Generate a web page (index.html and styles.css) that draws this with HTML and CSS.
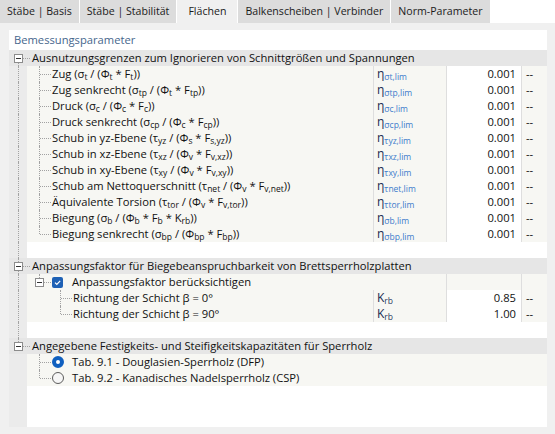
FILE: index.html
```html
<!DOCTYPE html>
<html lang="de">
  <head>
    <meta charset="UTF-8" />
    <title>Flächen</title>
    <link rel="stylesheet" href="styles.css">
  </head>
  <body>
    <div class="tabs">
      <div class="tab">Stäbe | Basis</div>
      <div class="tab">Stäbe | Stabilität</div>
      <div class="tab active">Flächen</div>
      <div class="tab">Balkenscheiben | Verbinder</div>
      <div class="tab">Norm-Parameter</div>
    </div>

    <div class="page">
      <div class="panel">
        <div class="title">Bemessungsparameter</div>

        <!-- Ausnutzungsgrenzen -->
        <div class="row group">
          <span class="node v-bot h-box"><span class="toggle"></span></span>
          <span class="label">Ausnutzungsgrenzen zum Ignorieren von Schnittgrößen und Spannungen</span>
        </div>
        <div class="row item">
          <span class="node v-full"></span><span class="node v-full h"></span>
          <span class="label">Zug (σ<sub>t</sub> / (Φ<sub>t</sub> * F<sub>t</sub>))</span>
          <span class="sym">η<sub>σt,lim</sub></span><span class="val">0.001</span><span class="unit">--</span>
        </div>
        <div class="row item">
          <span class="node v-full"></span><span class="node v-full h"></span>
          <span class="label">Zug senkrecht (σ<sub>tp</sub> / (Φ<sub>t</sub> * F<sub>tp</sub>))</span>
          <span class="sym">η<sub>σtp,lim</sub></span><span class="val">0.001</span><span class="unit">--</span>
        </div>
        <div class="row item">
          <span class="node v-full"></span><span class="node v-full h"></span>
          <span class="label">Druck (σ<sub>c</sub> / (Φ<sub>c</sub> * F<sub>c</sub>))</span>
          <span class="sym">η<sub>σc,lim</sub></span><span class="val">0.001</span><span class="unit">--</span>
        </div>
        <div class="row item">
          <span class="node v-full"></span><span class="node v-full h"></span>
          <span class="label">Druck senkrecht (σ<sub>cp</sub> / (Φ<sub>c</sub> * F<sub>cp</sub>))</span>
          <span class="sym">η<sub>σcp,lim</sub></span><span class="val">0.001</span><span class="unit">--</span>
        </div>
        <div class="row item">
          <span class="node v-full"></span><span class="node v-full h"></span>
          <span class="label">Schub in yz-Ebene (τ<sub>yz</sub> / (Φ<sub>s</sub> * F<sub>s,yz</sub>))</span>
          <span class="sym">η<sub>τyz,lim</sub></span><span class="val">0.001</span><span class="unit">--</span>
        </div>
        <div class="row item">
          <span class="node v-full"></span><span class="node v-full h"></span>
          <span class="label">Schub in xz-Ebene (τ<sub>xz</sub> / (Φ<sub>v</sub> * F<sub>v,xz</sub>))</span>
          <span class="sym">η<sub>τxz,lim</sub></span><span class="val">0.001</span><span class="unit">--</span>
        </div>
        <div class="row item">
          <span class="node v-full"></span><span class="node v-full h"></span>
          <span class="label">Schub in xy-Ebene (τ<sub>xy</sub> / (Φ<sub>v</sub> * F<sub>v,xy</sub>))</span>
          <span class="sym">η<sub>τxy,lim</sub></span><span class="val">0.001</span><span class="unit">--</span>
        </div>
        <div class="row item">
          <span class="node v-full"></span><span class="node v-full h"></span>
          <span class="label">Schub am Nettoquerschnitt (τ<sub>net</sub> / (Φ<sub>v</sub> * F<sub>v,net</sub>))</span>
          <span class="sym">η<sub>τnet,lim</sub></span><span class="val">0.001</span><span class="unit">--</span>
        </div>
        <div class="row item">
          <span class="node v-full"></span><span class="node v-full h"></span>
          <span class="label">Äquivalente Torsion (τ<sub>tor</sub> / (Φ<sub>v</sub> * F<sub>v,tor</sub>))</span>
          <span class="sym">η<sub>τtor,lim</sub></span><span class="val">0.001</span><span class="unit">--</span>
        </div>
        <div class="row item">
          <span class="node v-full"></span><span class="node v-full h"></span>
          <span class="label">Biegung (σ<sub>b</sub> / (Φ<sub>b</sub> * F<sub>b</sub> * K<sub>rb</sub>))</span>
          <span class="sym">η<sub>σb,lim</sub></span><span class="val">0.001</span><span class="unit">--</span>
        </div>
        <div class="row item">
          <span class="node v-full"></span><span class="node v-top h"></span>
          <span class="label">Biegung senkrecht (σ<sub>bp</sub> / (Φ<sub>bp</sub> * F<sub>bp</sub>))</span>
          <span class="sym">η<sub>σbp,lim</sub></span><span class="val">0.001</span><span class="unit">--</span>
        </div>
        <div class="row gap"><span class="node v-full"></span></div>

        <!-- Anpassungsfaktor -->
        <div class="row group">
          <span class="node v-full h-box"><span class="toggle"></span></span>
          <span class="label">Anpassungsfaktor für Biegebeanspruchbarkeit von Brettsperrholzplatten</span>
        </div>
        <div class="row item">
          <span class="node v-full"></span><span class="node v-top h-box"><span class="toggle"></span></span>
          <span class="check">
            <svg width="11" height="11" viewBox="0 0 11 11"><path d="M3 5.6l1.8 1.8 3.4-3.6" fill="none" stroke="#fff" stroke-width="1.2"/></svg>
          </span>
          <span class="label wide">Anpassungsfaktor berücksichtigen</span>
          <span class="val blank"></span><span class="unit"></span>
        </div>
        <div class="row item">
          <span class="node v-full"></span><span class="node"></span><span class="node v-full h"></span>
          <span class="label">Richtung der Schicht β = 0°</span>
          <span class="sym k">K<sub>rb</sub></span><span class="val">0.85</span><span class="unit">--</span>
        </div>
        <div class="row item">
          <span class="node v-full"></span><span class="node"></span><span class="node v-top h"></span>
          <span class="label">Richtung der Schicht β = 90°</span>
          <span class="sym k">K<sub>rb</sub></span><span class="val">1.00</span><span class="unit">--</span>
        </div>
        <div class="row gap"><span class="node v-full"></span></div>

        <!-- Festigkeitskapazitäten -->
        <div class="row group">
          <span class="node v-top h-box"><span class="toggle"></span></span>
          <span class="label">Angegebene Festigkeits- und Steifigkeitskapazitäten für Sperrholz</span>
        </div>
        <div class="row item">
          <span class="node"></span><span class="node v-full h"></span>
          <span class="radio on"></span>
          <span class="label">Tab. 9.1 - Douglasien-Sperrholz (DFP)</span>
        </div>
        <div class="row item">
          <span class="node"></span><span class="node v-top h"></span>
          <span class="radio"></span>
          <span class="label">Tab. 9.2 - Kanadisches Nadelsperrholz (CSP)</span>
        </div>

        <div class="fill"></div>
      </div>
    </div>
  </body>
</html>
```

FILE: styles.css
```css
body {
  margin: 0;
  font-family: "Open Sans", "Noto Sans", sans-serif;
  font-size: 11.2px;
  color: #111;
  overflow: hidden;
}

/* tab strip */
.tabs {
  display: flex;
  height: 23px;
  background: #fff;
}
.tab {
  padding: 0 7px;
  margin-right: 1px;
  line-height: 23px;
  font-size: 10.6px;
  background: #dcdcdc;
  color: #1b1b1b;
  white-space: nowrap;
}
.tab.active {
  padding: 0 11px;
  background: #f0f0f0;
}

.page {
  box-sizing: border-box;
  height: 411px;
  padding: 7px 8px 7px 9px;
  background: #f0f0f0;
}
.panel {
  display: flex;
  flex-direction: column;
  height: 100%;
  background: #fff;
}
.title {
  height: 20px;
  line-height: 20px;
  padding-left: 5px;
  color: #46668c;
}

/* tree rows */
.row {
  display: flex;
  align-items: center;
  height: 16px;
  line-height: 16px;
  white-space: nowrap;
}
.row.group {
  background: #e6e6e6;
}
.row.item {
  background: linear-gradient(to right, #ebebeb 18px, #f7f7f3 18px);
}
.row.gap,
.fill {
  background: linear-gradient(to right, #ebebeb 18px, #fff 18px);
}
.fill {
  flex: 1;
}

.label {
  flex: 1;
  padding-left: 1px;
}
.group .label {
  padding-left: 2px;
}
.label.wide {
  padding-left: 9px;
}
.radio + .label {
  padding-left: 8px;
}

sub {
  font-size: 8.5px;
  line-height: 0;
  vertical-align: -2px;
}

/* connector cells: dotted lines drawn by the pseudo elements */
.node {
  position: relative;
  flex: none;
  width: 21px;
  height: 16px;
}
.node::before,
.node::after {
  content: "";
  position: absolute;
}
.v-full::before,
.v-top::before,
.v-bot::before {
  left: 9px;
  border-left: 1px dotted #a2a2a2;
}
.v-full::before {
  top: 0;
  bottom: 0;
}
.v-top::before {
  top: 0;
  height: 8px;
}
.v-bot::before {
  top: 8px;
  bottom: 0;
}
.h::after,
.h-box::after {
  top: 8px;
  right: 0;
  border-top: 1px dotted #a2a2a2;
}
.h::after {
  left: 10px;
}
.h-box::after {
  left: 14px;
}

.toggle {
  position: absolute;
  left: 5px;
  top: 4px;
  width: 7px;
  height: 7px;
  border: 1px solid #8c8c8c;
  background: #fff;
}
.toggle::after {
  content: "";
  position: absolute;
  left: 1px;
  right: 1px;
  top: 3px;
  height: 1px;
  background: #333;
}

.check {
  flex: none;
  width: 11px;
  height: 11px;
  margin-left: 1px;
  border-radius: 2px;
  background: #1f61b5;
}
.check svg {
  display: block;
}

.radio {
  flex: none;
  box-sizing: border-box;
  width: 12px;
  height: 12px;
  margin-left: 1px;
  border: 1px solid #5c5c5c;
  border-radius: 50%;
  background: #f6f6f6;
}
.radio.on {
  border: 4px solid #0f5fbf;
  background: #fff;
}

/* table columns */
.sym,
.val,
.unit {
  flex: none;
  box-sizing: border-box;
  height: 16px;
  border-left: 1px solid #dedede;
}
.sym {
  width: 73px;
  padding-left: 3px;
  color: #1a2b50;
  font-size: 12px;
}
.sym sub {
  color: #3d7ccc;
  font-size: 8.5px;
}
.sym.k sub {
  color: #2a3a60;
}
.val {
  width: 75px;
  padding-right: 5px;
  text-align: right;
  background: #fff;
}
.val.blank {
  background: transparent;
}
.unit {
  width: 26px;
  padding-left: 4px;
}
```
